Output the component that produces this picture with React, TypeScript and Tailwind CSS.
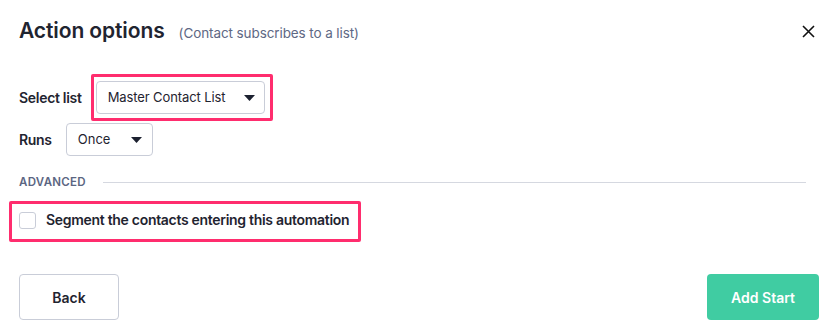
import React from 'react';

function Caret() {
  return (
    <svg width="11" height="6" viewBox="0 0 11 6" className="shrink-0">
      <path d="M0 0h11L5.5 6z" fill="#1c2130" />
    </svg>
  );
}

export default function App() {
  return (
    <div
      className="w-[836px] h-[335px] bg-white text-[#1f2430] relative"
      style={{ fontFamily: 'Inter, "Noto Sans", sans-serif' }}
    >
      {/* Header */}
      <div className="flex items-center justify-between pl-[19px] pr-[21px] pt-[17px]">
        <div className="flex items-baseline gap-[14px]">
          <h1 className="text-[21px] leading-[28px] font-semibold tracking-[-0.1px]">Action options</h1>
          <span className="text-[13.5px] text-[#5e6884] tracking-[-0.1px]">(Contact subscribes to a list)</span>
        </div>
        <button className="w-[14px] h-[14px] flex items-center justify-center">
          <svg width="13" height="13" viewBox="0 0 13 13">
            <path d="M1 1l11 11M12 1L1 12" stroke="#111" strokeWidth="1.6" />
          </svg>
        </button>
      </div>

      {/* Body */}
      <div className="px-[19px] pt-[36px]">
        <div className="flex items-center gap-[14px]">
          <span className="text-[14px] font-semibold tracking-[-0.3px]">Select list</span>
          <div className="relative">
            <div className="w-[169px] h-[33px] border border-[#c9cdd8] rounded-[4px] flex items-center justify-between pl-[11px] pr-[9px]">
              <span className="text-[13px] tracking-[-0.1px]">Master Contact List</span>
              <Caret />
            </div>
            <div className="absolute -left-[5px] -top-[7px] -right-[8px] -bottom-[7px] border-[3px] border-[#ff2d6e] rounded-[2px] pointer-events-none" />
          </div>
        </div>

        <div className="flex items-center gap-[14px] mt-[9px]">
          <span className="text-[14px] font-semibold tracking-[-0.3px]">Runs</span>
          <div className="w-[87px] h-[33px] border border-[#c9cdd8] rounded-[4px] flex items-center justify-between pl-[11px] pr-[10px]">
            <span className="text-[13px]">Once</span>
            <Caret />
          </div>
        </div>

        <div className="flex items-center gap-[17px] mt-[18px] mr-[11px]">
          <span className="text-[11.5px] font-semibold text-[#5b6682] tracking-[0.3px]">ADVANCED</span>
          <div className="flex-1 h-px bg-[#d5d8e0]" />
        </div>

        <div className="mt-[19px] flex">
          <label className="relative flex items-center gap-[10px]">
            <span className="w-[17px] h-[17px] border border-[#c9cdd8] rounded-[3px] bg-white" />
            <span className="text-[14px] font-semibold leading-[20px] tracking-[-0.3px]">Segment the contacts entering this automation</span>
            <span className="absolute -left-[10px] -top-[9px] -right-[12px] -bottom-[12px] border-[3px] border-[#ff2d6e] rounded-[2px] pointer-events-none" />
          </label>
        </div>
      </div>

      {/* Footer */}
      <div className="flex items-center justify-between pl-[19px] pr-[17px] mt-[44px]">
        <button className="w-[100px] h-[46px] border border-[#c9cdd8] rounded-[4px] text-[14px] font-semibold">
          Back
        </button>
        <button className="w-[112px] h-[46px] bg-[#40cca2] rounded-[4px] text-[14px] font-semibold text-white">
          Add Start
        </button>
      </div>
    </div>
  );
}
